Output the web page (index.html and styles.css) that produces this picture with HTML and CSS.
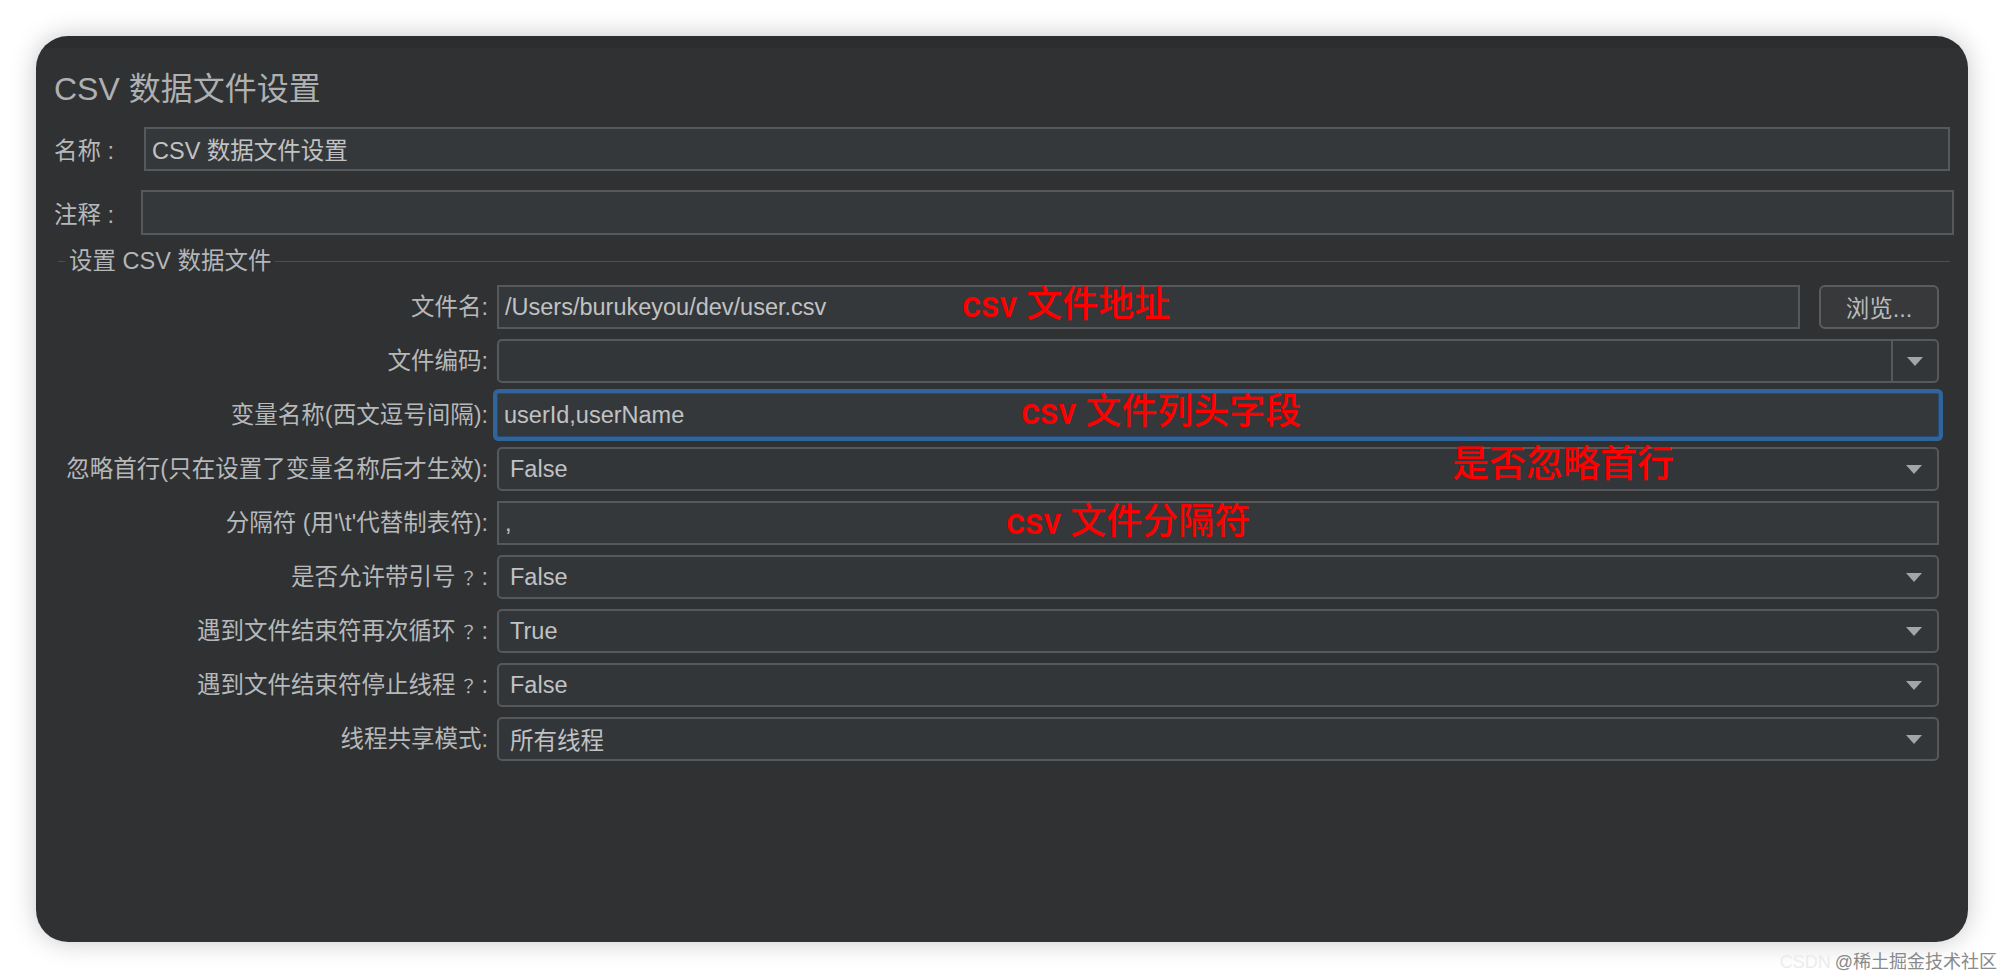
FILE: index.html
```html
<!DOCTYPE html>
<html lang="zh-CN">
<head>
<meta charset="utf-8">
<title>CSV 数据文件设置</title>
<link rel="stylesheet" href="styles.css">
</head>
<body>
<div class="panel">
  <h1 class="title">CSV 数据文件设置</h1>
  <div class="line-row name-row">
    <span class="line-label">名称 :</span>
    <div class="field text">CSV 数据文件设置</div>
  </div>
  <div class="line-row comment-row">
    <span class="line-label">注释 :</span>
    <div class="field text"></div>
  </div>
  <div class="group-title"><span class="group-text">设置 CSV 数据文件</span></div>
  <div class="form">
    <span class="form-label">文件名:</span>
    <div class="file-row">
      <div class="field text">/Users/burukeyou/dev/user.csv</div>
      <div class="button">浏览...</div>
    </div>

    <span class="form-label">文件编码:</span>
    <div class="field combo editable"><span class="value"></span><span class="arrow-box"><i class="arrow"></i></span></div>

    <span class="form-label">变量名称(西文逗号间隔):</span>
    <div class="field text focused">userId,userName</div>

    <span class="form-label">忽略首行(只在设置了变量名称后才生效):</span>
    <div class="field combo"><span class="value">False</span><span class="arrow-box"><i class="arrow"></i></span></div>

    <span class="form-label">分隔符 (用'\t'代替制表符):</span>
    <div class="field text">,</div>

    <span class="form-label">是否允许带引号<span class="q" lang="ja">？</span>:</span>
    <div class="field combo"><span class="value">False</span><span class="arrow-box"><i class="arrow"></i></span></div>

    <span class="form-label">遇到文件结束符再次循环<span class="q" lang="ja">？</span>:</span>
    <div class="field combo"><span class="value">True</span><span class="arrow-box"><i class="arrow"></i></span></div>

    <span class="form-label">遇到文件结束符停止线程<span class="q" lang="ja">？</span>:</span>
    <div class="field combo"><span class="value">False</span><span class="arrow-box"><i class="arrow"></i></span></div>

    <span class="form-label">线程共享模式:</span>
    <div class="field combo"><span class="value">所有线程</span><span class="arrow-box"><i class="arrow"></i></span></div>

    <span class="note note-file">csv 文件地址</span>
    <span class="note note-vars">csv 文件列头字段</span>
    <span class="note note-ignore">是否忽略首行</span>
    <span class="note note-delim">csv 文件分隔符</span>
  </div>
</div>
<div class="watermark"><span class="csdn">CSDN</span><span class="author">@稀土掘金技术社区</span></div>
</body>
</html>
```

FILE: styles.css
```css
html, body {
  margin: 0;
  padding: 0;
  background: #ffffff;
}

body {
  font-family: "Liberation Sans", "Noto Sans CJK SC", sans-serif;
  font-size: 23.5px;
  color: #b6b8ba;
  width: 2004px;
  height: 978px;
  overflow: hidden;
  padding-top: 36px;
  box-sizing: border-box;
}

.panel {
  margin-left: 36px;
  width: 1932px;
  height: 906px;
  box-sizing: border-box;
  border-radius: 32px;
  background: linear-gradient(#2b2d2f 0, #2b2d2f 12px, #2f3133 12px);
  box-shadow: 0 0 26px rgba(0, 0, 0, 0.22);
  padding: 33px 0 0 18px;
  overflow: hidden;
}

.title {
  margin: 0;
  font-size: 32px;
  font-weight: normal;
  line-height: 40px;
  color: #aeb0b2;
  height: 40px;
}

.line-row {
  display: flex;
  align-items: center;
}

.name-row {
  margin-top: 18px;
  height: 44px;
  margin-right: 18px;
}

.comment-row {
  margin-top: 19px;
  height: 45px;
  margin-right: 14px;
}

.name-row .line-label {
  width: 90px;
}

.comment-row .line-label {
  width: 87px;
}

.line-label {
  flex: none;
  color: #b6b8ba;
}

.field {
  box-sizing: border-box;
  height: 100%;
  background: #35383a;
  border: 2px solid #56595b;
  color: #c0c2c4;
  display: flex;
  align-items: center;
  white-space: nowrap;
}

.line-row .field {
  flex: 1;
  padding-left: 6px;
}

.group-title {
  margin-top: 11px;
  height: 30px;
  display: flex;
  align-items: center;
  margin-left: 4px;
  margin-right: 18px;
}

.group-title::before {
  content: "";
  width: 7px;
  height: 1px;
  background: #4c4e51;
}

.group-title::after {
  content: "";
  flex: 1;
  height: 1px;
  background: #4c4e51;
}

.group-text {
  padding: 0 4px;
  color: #b4b6b8;
  line-height: 30px;
}

.form {
  position: relative;
  margin-top: 9px;
  margin-right: 29px;
  display: grid;
  grid-template-columns: 434px 1fr;
  grid-auto-rows: 44px;
  column-gap: 9px;
  row-gap: 10px;
}

.form-label {
  text-align: right;
  line-height: 44px;
  white-space: nowrap;
  color: #b6b8ba;
}

.q {
  display: inline-block;
  width: 26px;
  text-align: center;
  font-family: "Noto Sans CJK JP", sans-serif;
  font-size: 18px;
  vertical-align: baseline;
}

.form .field.text {
  padding-left: 6px;
}

.file-row {
  display: flex;
  gap: 19px;
  height: 44px;
}

.file-row .field {
  flex: 1;
}

.button {
  flex: none;
  width: 120px;
  box-sizing: border-box;
  height: 44px;
  border: 2px solid #5a5d5f;
  border-radius: 6px;
  background: #37393b;
  color: #b9bbbd;
  display: flex;
  align-items: center;
  justify-content: center;
}

.combo {
  border-radius: 5px;
  background: #333638;
}

.combo .value {
  flex: 1;
  padding-left: 11px;
}

.arrow-box {
  flex: none;
  width: 46px;
  height: 100%;
  display: flex;
  align-items: center;
  justify-content: center;
}

.editable .arrow-box {
  border-left: 2px solid #56595b;
  box-sizing: border-box;
}

.arrow {
  width: 0;
  height: 0;
  border-left: 8px solid transparent;
  border-right: 8px solid transparent;
  border-top: 9px solid #a3a5a7;
}

.focused {
  border: 1px solid #254b73;
  border-radius: 2px;
  box-shadow: 0 0 0 4px #30649b;
  padding-left: 7px;
}

.note {
  position: absolute;
  font-family: "Roboto", "Noto Sans CJK SC", sans-serif;
  font-size: 36px;
  font-weight: 500;
  line-height: 44px;
  color: #ff0000;
  white-space: nowrap;
}

.note-file {
  left: 908px;
  top: -2px;
}

.note-vars {
  left: 967px;
  top: 105px;
}

.note-ignore {
  left: 1398px;
  top: 158px;
  font-size: 37px;
}

.note-delim {
  left: 952px;
  top: 215px;
}

.watermark {
  margin-top: 10px;
  height: 20px;
  line-height: 20px;
  font-size: 18px;
  text-align: right;
  padding-right: 7px;
  white-space: nowrap;
}

.csdn {
  color: #ececec;
  margin-right: 4px;
}

.author {
  color: #8a8a8a;
}
```
